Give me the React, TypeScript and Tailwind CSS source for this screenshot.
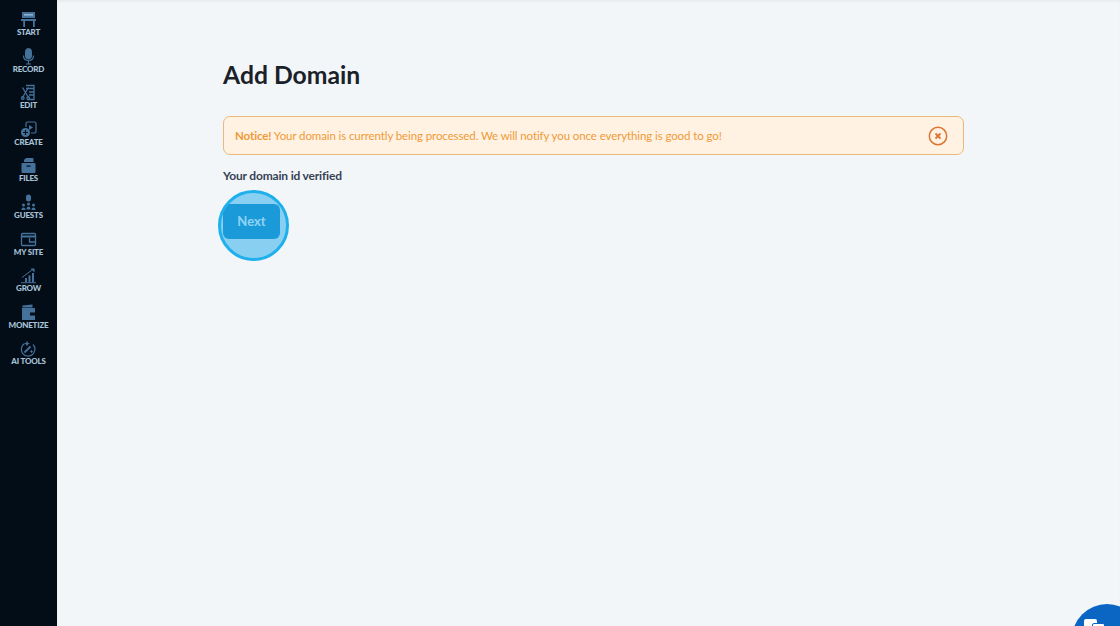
const navIcon = "w-[17px] h-[17px] text-[#44729b]";

function StartIcon() {
  return (
    <svg viewBox="0 0 17 17" className={navIcon} fill="currentColor">
      <path d="M2 1h13v6H2z" />
      <path d="M1 8h15v2h-1.200v6h-1.800v-6H5v6H3.200v-6H1z" />
      <path d="M4 3h9v1.600H4z" fill="#8fb4d0" />
    </svg>
  );
}

function RecordIcon() {
  return (
    <svg viewBox="0 0 17 17" className={navIcon} fill="none" stroke="currentColor">
      <rect x="5.500" y="0.500" width="6" height="10.500" rx="3" fill="currentColor" />
      <path d="M3.500 7.500c0 3 2 5 5 5s5-2 5-5M8.500 12.500v3M6 16h5" strokeWidth="1.200" />
    </svg>
  );
}

function EditIcon() {
  return (
    <svg viewBox="0 0 17 17" className={navIcon} fill="none" stroke="currentColor" strokeWidth="1.300">
      <path d="M6 1.500h8v14H7" />
      <path d="M6 4.500h8M9 8h5M9 11h5" />
      <path d="M2.500 3.500l6 10M8.500 3.500l-6 10" />
      <circle cx="2.800" cy="14" r="1.300" />
      <circle cx="8.200" cy="14" r="1.300" />
    </svg>
  );
}

function CreateIcon() {
  return (
    <svg viewBox="0 0 17 17" className={navIcon} fill="none" stroke="currentColor" strokeWidth="1.200">
      <path d="M6 6V2.500a1.500 1.500 0 0 1 1.500-1.500h7A1.500 1.500 0 0 1 16 2.500v8a1.500 1.500 0 0 1-1.500 1.500H11" />
      <path d="M9 4l4 2.600L9 9z" fill="currentColor" stroke="none" />
      <circle cx="5.500" cy="11.500" r="4.500" fill="currentColor" stroke="none" />
      <path d="M5.500 9v5M3 11.500h5" stroke="#030d17" />
    </svg>
  );
}

function FilesIcon() {
  return (
    <svg viewBox="0 0 17 17" className={navIcon} fill="currentColor">
      <path d="M6 1h6.500a1 1 0 0 1 1 1v3H4V3z" />
      <path d="M2.500 6h12a1 1 0 0 1 1 1v8a1 1 0 0 1-1 1h-12a1 1 0 0 1-1-1V7a1 1 0 0 1 1-1z" />
      <path d="M6.500 8.500h4v1.200h-4z" fill="#030d17" />
    </svg>
  );
}

function GuestsIcon() {
  return (
    <svg viewBox="0 0 17 17" className={navIcon} fill="currentColor">
      <rect x="6" y="0.500" width="5" height="7" rx="2.500" />
      <circle cx="8.500" cy="10" r="1.500" />
      <circle cx="3.500" cy="11" r="1.500" />
      <circle cx="13.500" cy="11" r="1.500" />
      <path d="M6.500 15.500c0-1.800.8-3 2-3s2 1.200 2 3zM1.500 16c0-1.500.8-2.500 2-2.500s2 1 2 2.500zM11.500 16c0-1.500.8-2.500 2-2.500s2 1 2 2.500z" />
    </svg>
  );
}

function MySiteIcon() {
  return (
    <svg viewBox="0 0 17 17" className={navIcon} fill="none" stroke="currentColor" strokeWidth="1.300">
      <rect x="1.500" y="2.500" width="14" height="12" rx="1" />
      <path d="M1.500 5.500h14" strokeWidth="2" />
      <path d="M9.500 7v4h6" />
    </svg>
  );
}

function GrowIcon() {
  return (
    <svg viewBox="0 0 17 17" className={navIcon} fill="currentColor">
      <path d="M5 11h2v4H5zM8.500 8.500h2V15h-2zM12 6h2v9h-2z" />
      <path d="M1 15.200h15v1H1z" />
      <path d="M2 10.500L12 3" stroke="currentColor" fill="none" />
      <path d="M10.500 1.500h4v4z" />
    </svg>
  );
}

function MonetizeIcon() {
  return (
    <svg viewBox="0 0 17 17" className={navIcon} fill="currentColor">
      <path d="M2.500 1.500l10-1v3h-10z" />
      <path d="M2 4h13v12H2z" />
      <path d="M10 8.500h5v3h-5z" fill="#030d17" />
    </svg>
  );
}

function AiToolsIcon() {
  return (
    <svg viewBox="0 0 17 17" className={navIcon} fill="none" stroke="currentColor" strokeWidth="1.200">
      <path d="M13 4.500a6.800 6.800 0 1 1-8.500-1" />
      <path d="M4.500 12.500l6-6" strokeWidth="1.800" />
      <path d="M7 .8l.8 2 2 .8-2 .8-.8 2-.8-2-2-.8 2-.8z" fill="currentColor" stroke="none" />
      <path d="M11.500 9.500l.6 1.400 1.400.6-1.400.6-.6 1.400-.6-1.400-1.400-.6 1.400-.6z" fill="currentColor" stroke="none" />
    </svg>
  );
}

const navItems = [
  { label: "START", icon: <StartIcon /> },
  { label: "RECORD", icon: <RecordIcon /> },
  { label: "EDIT", icon: <EditIcon /> },
  { label: "CREATE", icon: <CreateIcon /> },
  { label: "FILES", icon: <FilesIcon /> },
  { label: "GUESTS", icon: <GuestsIcon /> },
  { label: "MY SITE", icon: <MySiteIcon /> },
  { label: "GROW", icon: <GrowIcon /> },
  { label: "MONETIZE", icon: <MonetizeIcon /> },
  { label: "AI TOOLS", icon: <AiToolsIcon /> },
];

function Sidebar() {
  return (
    <aside className="w-[57px] shrink-0 bg-[#030d17] flex flex-col items-center pt-[11px]">
      {navItems.map((item) => (
        <div key={item.label} className="h-[36.600px] flex flex-col items-center">
          {item.icon}
          <span className="text-[8px] leading-[9px] font-black whitespace-nowrap tracking-[-0.200px] text-[#a9c3d8]">
            {item.label}
          </span>
        </div>
      ))}
    </aside>
  );
}

export default function App() {
  return (
    <div className="relative h-[626px] w-[1120px] overflow-hidden flex bg-[#f2f6f9] font-['Lato','Noto_Sans',sans-serif]">
      <Sidebar />
      <main className="flex-1 pl-[166px] pt-[60px] shadow-[inset_0_2px_2px_rgba(0,0,0,0.04)]">
        <h1 className="text-[24.700px] leading-[30px] font-bold text-[#1a2128]">Add Domain</h1>
        <div className="mt-[26px] w-[741px] h-[39px] rounded-[7px] border border-[#e9b97a] bg-[#fff2e3] pl-[11px] pr-[15px] flex items-center justify-between">
          <p className="text-[11.500px] tracking-[-0.105px] text-[#ef9a37]">
            <span className="font-bold">Notice!</span> Your domain is currently being processed. We will notify you once everything is good to go!
          </p>
          <svg viewBox="0 0 20 20" className="w-[20px] h-[20px] text-[#dc7433]" fill="none" stroke="currentColor" strokeWidth="1.500">
            <circle cx="10" cy="10" r="8.700" />
            <path d="M7.500 7.500l5 5M12.500 7.500l-5 5" strokeWidth="1.800" />
          </svg>
        </div>
        <p className="mt-[13px] text-[12px] leading-[16px] tracking-[-0.180px] font-bold text-[#364254]">Your domain id verified</p>
        <button className="mt-[20px] w-[57px] h-[35px] rounded-[6px] bg-[#168cc8] text-[13px] font-bold text-white">
          Next
        </button>
      </main>
      {/* click highlight */}
      <div className="absolute left-[217.500px] top-[189.500px] w-[71px] h-[71px] rounded-full border-[3px] border-[#1fb0ec] bg-[#1fa8ec]/50" />
      <button className="absolute left-[1072px] top-[604px] w-[70px] h-[70px] rounded-full bg-[#0b66c3]">
        <span className="absolute left-[12px] top-[15px] w-[13px] h-[10px] rounded-[2px] bg-white" />
        <span className="absolute left-[20px] top-[19px] w-[13px] h-[8px] rounded-[2px] border border-[#0b66c3] bg-white" />
      </button>
    </div>
  );
}
